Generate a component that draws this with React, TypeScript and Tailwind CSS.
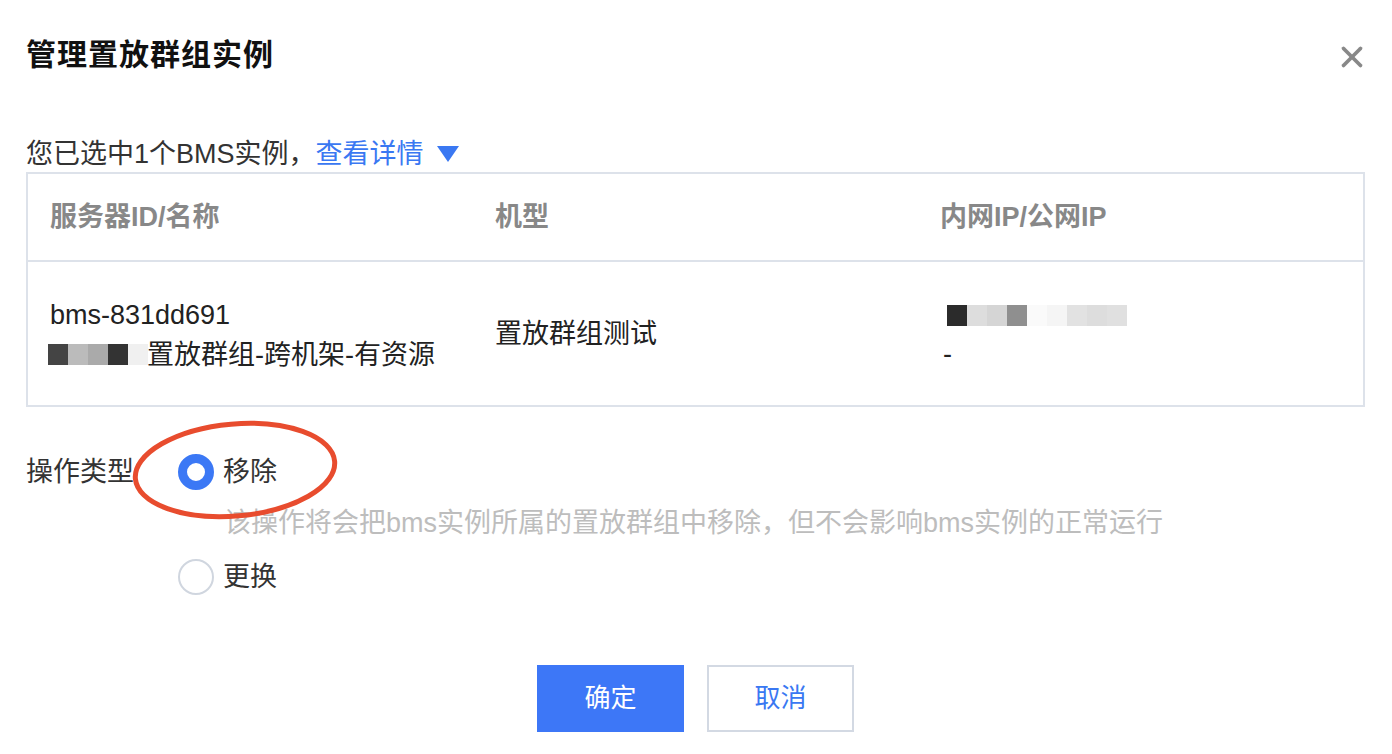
import { X } from "lucide-react"

const font = { fontFamily: '"Liberation Sans", "Noto Sans CJK SC", sans-serif' }

function Mosaic({ colors }: { colors: string[] }) {
  return (
    <span className="inline-flex h-[21px] align-middle">
      {colors.map((c, i) => (
        <span key={i} className="w-[20px] h-full" style={{ backgroundColor: c }} />
      ))}
    </span>
  )
}

export default function App() {
  return (
    <div className="w-[1392px] h-[754px] bg-white text-[#333] relative overflow-hidden" style={font}>
      <div className="pl-[26px] pr-[27px]">
        {/* Header */}
        <div className="h-[104px] flex items-center justify-between">
          <h1 className="text-[30px] font-bold text-[#111] tracking-[1px] mt-[4px]">管理置放群组实例</h1>
          <X className="w-[34px] h-[34px] text-[#888] mt-[10px] -mr-[4px]" strokeWidth={2.6} />
        </div>

        {/* Selected info */}
        <div className="h-[68px] flex items-end pb-[2px]">
          <p className="text-[27px] leading-[32px] text-[#333] flex items-center">
            <span>您已选中1个BMS实例，</span>
            <span className="text-[#3a78f2]">查看详情</span>
            <svg className="ml-[12px]" width="24" height="18" viewBox="0 0 24 18">
              <path d="M1 1 H23 L12 17 Z" fill="#3a78f2" />
            </svg>
          </p>
        </div>

        {/* Table */}
        <div className="border-2 border-[#dde2ea]">
          <div className="grid grid-cols-3 h-[88px] items-center border-b-2 border-[#dde2ea] text-[27px] font-semibold text-[#888]">
            <div className="pl-[22px]">服务器ID/名称</div>
            <div className="pl-[22px]">机型</div>
            <div className="pl-[22px]">内网IP/公网IP</div>
          </div>
          <div className="grid grid-cols-3 h-[143px] items-center text-[27px] text-[#222] leading-[40px]">
            <div className="pl-[22px] mt-[2px]">
              <div>bms-831dd691</div>
              <div className="flex items-center -ml-[2px]">
                <Mosaic colors={["#444", "#bbb", "#aaa", "#333", "#f0f0f0"]} />
                <span className="-ml-[1px]">置放群组-跨机架-有资源</span>
              </div>
            </div>
            <div className="pl-[22px]">置放群组测试</div>
            <div className="pl-[29px]">
              <div className="flex items-center h-[40px] pt-[4px]">
                <Mosaic colors={["#2b2b2b", "#ddd", "#d5d5d5", "#8f8f8f", "#fafafa", "#f5f5f5", "#e2e2e2", "#ddd", "#e0e0e0"]} />
              </div>
              <div className="-ml-[4px]">-</div>
            </div>
          </div>
        </div>

        {/* Operation type */}
        <div className="mt-[45px] flex items-center h-[40px] text-[27px]">
          <span className="w-[152px] text-[#333]">操作类型</span>
          <span className="w-[36px] h-[36px] rounded-full border-[9px] border-[#3b78f5] bg-white" />
          <span className="ml-[9px] text-[#333]">移除</span>
        </div>
        <p className="mt-[15px] ml-[198px] text-[27px] leading-[32px] text-[#bdbdbd]">
          该操作将会把bms实例所属的置放群组中移除，但不会影响bms实例的正常运行
        </p>
        <div className="mt-[18px] flex items-center h-[40px] text-[27px]">
          <span className="w-[152px]" />
          <span className="w-[36px] h-[36px] rounded-full border-2 border-[#d0d6df] bg-white" />
          <span className="ml-[9px] text-[#333]">更换</span>
        </div>

        {/* Footer */}
        <div className="mt-[68px] flex justify-center gap-[23px]">
          <button className="w-[147px] h-[67px] bg-[#3d77f7] text-white text-[26px]">确定</button>
          <button className="w-[147px] h-[67px] border-2 border-[#d3d9e3] bg-white text-[#3a78f2] text-[26px]">取消</button>
        </div>
      </div>

      {/* Annotation ellipse */}
      <svg className="absolute left-[128px] top-[417px] pointer-events-none" width="216" height="108" viewBox="0 0 216 108">
        <ellipse cx="107" cy="53" rx="100" ry="46" transform="rotate(-5 107 53)" fill="none" stroke="#e84c2e" strokeWidth="5" />
      </svg>
    </div>
  )
}
